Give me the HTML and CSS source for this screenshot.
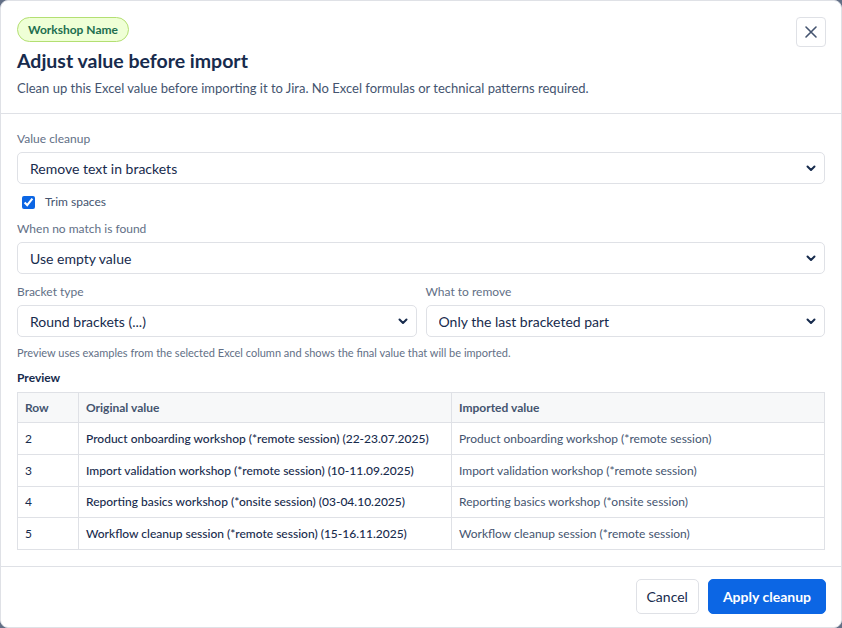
FILE: index.html
```html
<!DOCTYPE html>
<html>
<head>
	<title>Adjust value before import</title>
	<link rel="stylesheet" href="styles.css">
</head>
<body>
	<div class="dialog">
		<div class="dialog-head">
			<div class="head-text">
				<span class="badge">Workshop Name</span>
				<h1 class="title">Adjust value before import</h1>
				<p class="subtitle">Clean up this Excel value before importing it to Jira. No Excel formulas or technical patterns required.</p>
			</div>
			<button class="close" type="button" aria-label="Close">
				<svg width="14" height="14" viewBox="0 0 14 14"><path d="M2 2 L12 12 M12 2 L2 12" stroke="#44546f" stroke-width="1.6" stroke-linecap="round"/></svg>
			</button>
		</div>

		<div class="dialog-body">
			<label class="field-label">Value cleanup</label>
			<div class="select">
				<select><option>Remove text in brackets</option></select>
				<svg class="chev" width="10" height="7" viewBox="0 0 10 7"><path d="M1.5 1.5 L5 5 L8.5 1.5" fill="none" stroke="#172b4d" stroke-width="2" stroke-linecap="round" stroke-linejoin="round"/></svg>
			</div>

			<label class="check">
				<input type="checkbox" checked>
				<span>Trim spaces</span>
			</label>

			<label class="field-label">When no match is found</label>
			<div class="select">
				<select><option>Use empty value</option></select>
				<svg class="chev" width="10" height="7" viewBox="0 0 10 7"><path d="M1.5 1.5 L5 5 L8.5 1.5" fill="none" stroke="#172b4d" stroke-width="2" stroke-linecap="round" stroke-linejoin="round"/></svg>
			</div>

			<div class="two-col">
				<div>
					<label class="field-label">Bracket type</label>
					<div class="select">
						<select><option>Round brackets (...)</option></select>
						<svg class="chev" width="10" height="7" viewBox="0 0 10 7"><path d="M1.5 1.5 L5 5 L8.5 1.5" fill="none" stroke="#172b4d" stroke-width="2" stroke-linecap="round" stroke-linejoin="round"/></svg>
					</div>
				</div>
				<div>
					<label class="field-label">What to remove</label>
					<div class="select">
						<select><option>Only the last bracketed part</option></select>
						<svg class="chev" width="10" height="7" viewBox="0 0 10 7"><path d="M1.5 1.5 L5 5 L8.5 1.5" fill="none" stroke="#172b4d" stroke-width="2" stroke-linecap="round" stroke-linejoin="round"/></svg>
					</div>
				</div>
			</div>

			<p class="hint">Preview uses examples from the selected Excel column and shows the final value that will be imported.</p>

			<div class="preview-title">Preview</div>
			<table class="preview">
				<thead>
					<tr><th class="c-row">Row</th><th class="c-orig">Original value</th><th>Imported value</th></tr>
				</thead>
				<tbody>
					<tr><td>2</td><td class="orig">Product onboarding workshop (*remote session) (22-23.07.2025)</td><td class="imp">Product onboarding workshop (*remote session)</td></tr>
					<tr><td>3</td><td class="orig">Import validation workshop (*remote session) (10-11.09.2025)</td><td class="imp">Import validation workshop (*remote session)</td></tr>
					<tr><td>4</td><td class="orig">Reporting basics workshop (*onsite session) (03-04.10.2025)</td><td class="imp">Reporting basics workshop (*onsite session)</td></tr>
					<tr><td>5</td><td class="orig">Workflow cleanup session (*remote session) (15-16.11.2025)</td><td class="imp">Workflow cleanup session (*remote session)</td></tr>
				</tbody>
			</table>
		</div>

		<div class="dialog-foot">
			<button class="btn" type="button">Cancel</button>
			<button class="btn btn-primary" type="button">Apply cleanup</button>
		</div>
	</div>
</body>
</html>
```

FILE: styles.css
```css
*{
	margin: 0;
	padding: 0;
	box-sizing: border-box;
}
html, body{
	height: 100%;
}
body{
	background: #626f86;
	font-family: Lato, "Liberation Sans", sans-serif;
	color: #172b4d;
}
.dialog{
	height: 628px;
	width: 842px;
	background: #fff;
	border: 1px solid #dfe1e6;
	border-radius: 8px;
	display: flex;
	flex-direction: column;
}

.dialog-head{
	display: flex;
	justify-content: space-between;
	align-items: flex-start;
	padding: 16px 15px 16px 16px;
	border-bottom: 1px solid #dfe1e6;
}
.badge{
	display: inline-block;
	height: 25px;
	line-height: 23px;
	padding: 0 10px;
	border: 1px solid #b3df72;
	background: #efffd6;
	color: #216e4e;
	font-size: 12px;
	font-weight: 700;
	border-radius: 13px;
}
.title{
	margin-top: 6px;
	font-size: 19.5px;
	line-height: 26px;
	font-weight: 700;
	color: #172b4d;
}
.subtitle{
	margin-top: 5px;
	font-size: 13px;
	line-height: 18px;
	color: #44546f;
}
.close{
	width: 30px;
	height: 30px;
	border: 1px solid #dfe1e6;
	border-radius: 4px;
	background: #fff;
	display: flex;
	align-items: center;
	justify-content: center;
}

.dialog-body{
	flex: 1;
	padding: 17px 16px 15px 16px;
	border-bottom: 1px solid #dfe1e6;
}
.field-label{
	display: block;
	font-size: 12px;
	line-height: 16px;
	color: #626f86;
	margin-bottom: 5px;
}
.select{
	position: relative;
}
.select select{
	appearance: none;
	-webkit-appearance: none;
	width: 100%;
	height: 32px;
	padding: 0 30px 0 12px;
	border: 1px solid #dfe1e6;
	border-radius: 5px;
	background: #fff;
	font-family: inherit;
	font-size: 14px;
	color: #172b4d;
}
.select .chev{
	position: absolute;
	right: 9px;
	top: 13px;
	pointer-events: none;
}
.check{
	display: flex;
	align-items: center;
	gap: 10px;
	margin: 10px 0 11px 5px;
	font-size: 12px;
	line-height: 16px;
	color: #44546f;
}
.check input{
	width: 13px;
	height: 13px;
	accent-color: #0c66e4;
}
.two-col{
	display: grid;
	grid-template-columns: 1fr 1fr;
	gap: 9px;
	margin-top: 10px;
}
.hint{
	margin-top: 9px;
	font-size: 11px;
	line-height: 14px;
	color: #626f86;
}
.preview-title{
	margin-top: 10px;
	font-size: 12px;
	line-height: 16px;
	font-weight: 700;
	color: #172b4d;
}
.preview{
	margin-top: 6px;
	width: 100%;
	border-collapse: collapse;
	font-size: 12px;
}
.preview th, .preview td{
	border: 1px solid #dfe1e6;
	text-align: left;
	padding: 0 7px;
}
.preview th{
	height: 30px;
	background: #f7f8f9;
	color: #44546f;
	font-weight: 700;
}
.preview td{
	height: 31.75px;
	color: #172b4d;
}
.preview .c-row{
	width: 61px;
}
.preview .c-orig{
	width: 373px;
}
.preview td.orig{
	font-weight: 500;
	color: #172b4d;
}
.preview td.imp{
	color: #44546f;
}

.dialog-foot{
	display: flex;
	justify-content: flex-end;
	gap: 9px;
	padding: 12px 15px 13px 16px;
}
.btn{
	height: 35px;
	padding: 0 10px;
	border: 1px solid #dfe1e6;
	border-radius: 5px;
	background: #fff;
	font-family: inherit;
	font-size: 14px;
	color: #172b4d;
}
.btn-primary{
	background: #0c66e4;
	border-color: #0c66e4;
	color: #fff;
	font-weight: 700;
	padding: 0 14px;
}
```
